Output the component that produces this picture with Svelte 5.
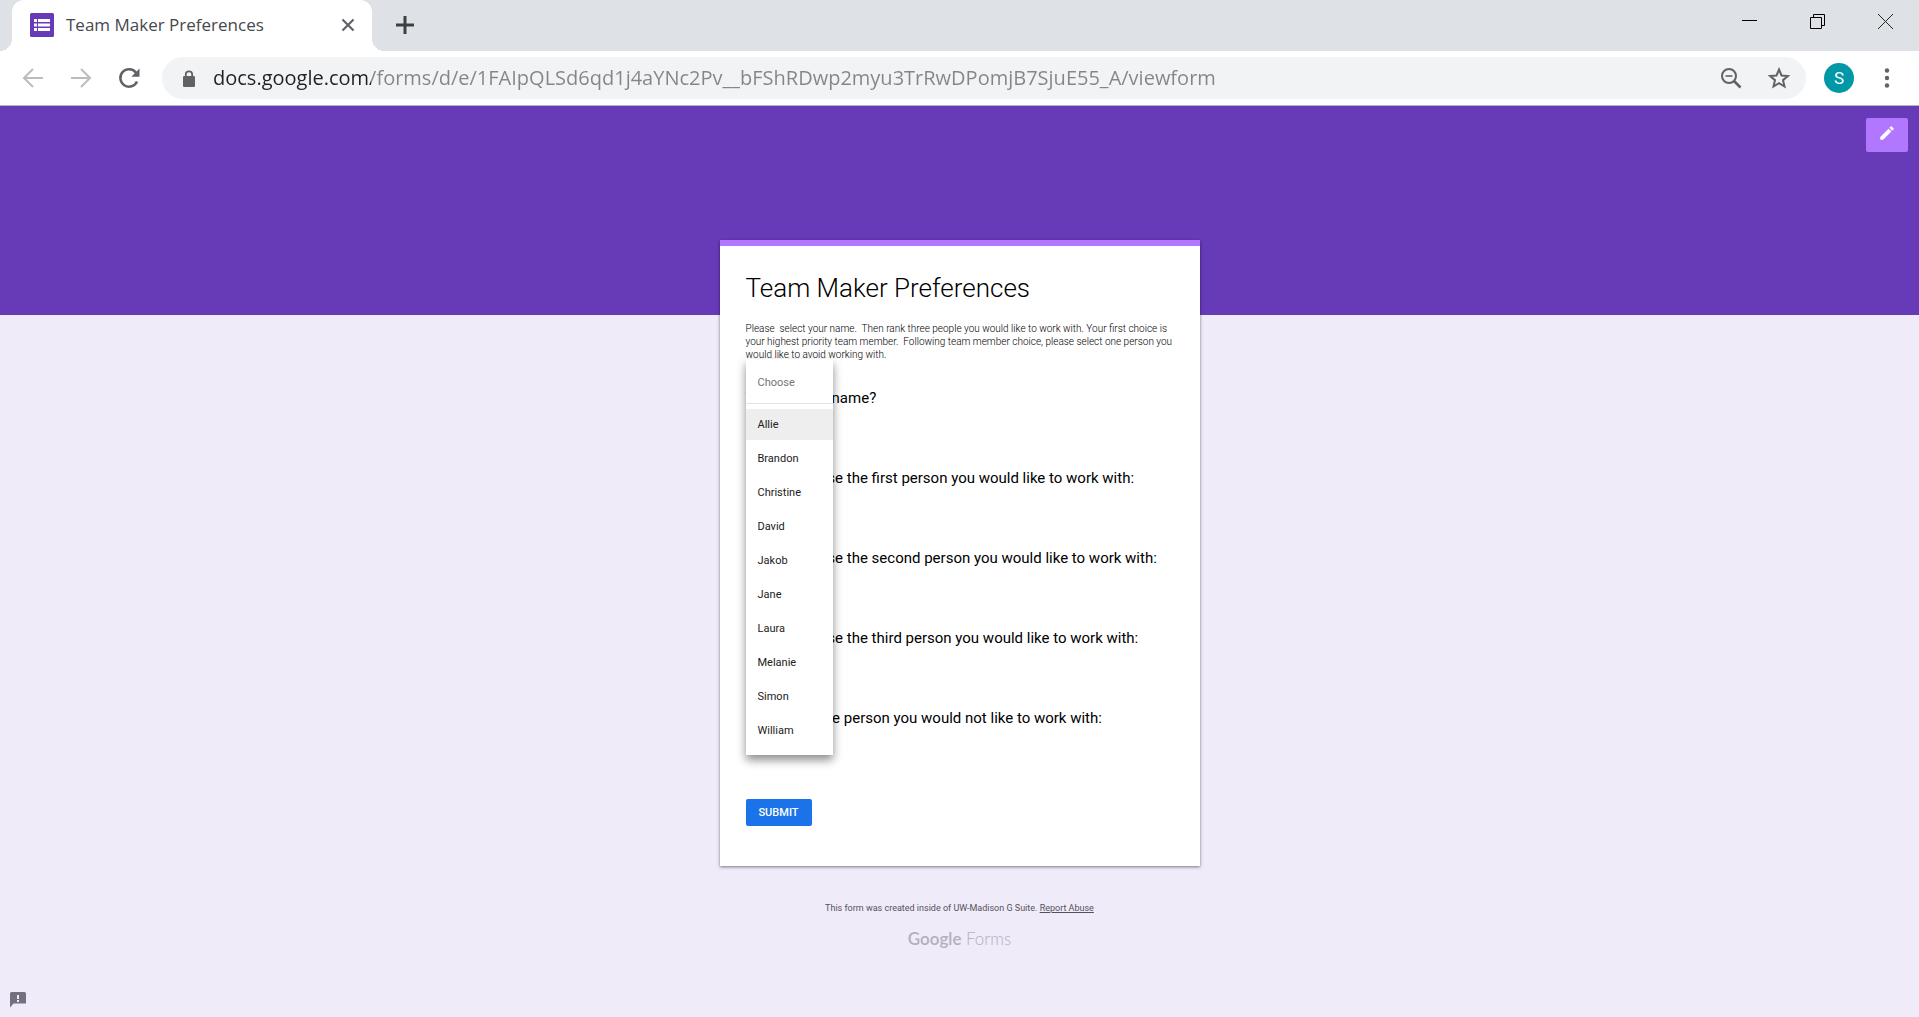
<script>
  const names = ['Allie', 'Brandon', 'Christine', 'David', 'Jakob', 'Jane', 'Laura', 'Melanie', 'Simon', 'William'];
  const questions = [
    { id: 'own', text: 'What is your name?' },
    { id: 'first', text: 'Please choose the first person you would like to work with:' },
    { id: 'second', text: 'Please choose the second person you would like to work with:' },
    { id: 'third', text: 'Please choose the third person you would like to work with:' },
    { id: 'avoid', text: 'Select the one person you would not like to work with:' },
  ];
  const description =
    'Please  select your name.  Then rank three people you would like to work with. Your first choice is your highest priority team member.  Following team member choice, please select one person you would like to avoid working with.';
  let highlighted = $state('Allie');
  let address = $state('docs.google.com/forms/d/e/1FAIpQLSd6qd1j4aYNc2Pv__bFShRDwp2myu3TrRwDPomjB7SjuE55_A/viewform');
</script>

<div class="window">
  <header class="tabstrip">
    <div class="tab">
      <svg class="favicon" viewBox="0 0 24 24" aria-hidden="true">
        <rect width="24" height="24" rx="1.5" fill="#673ab7" />
        <path d="M4 6h3v3H4zM8 6h12v3H8zM4 10.5h3v3H4zM8 10.5h12v3H8zM4 15h3v3H4zM8 15h12v3H8z" fill="#fff" />
      </svg>
      <span class="tab-title">Team Maker Preferences</span>
      <button class="icon-button" aria-label="Close tab">
        <svg viewBox="0 0 24 24"><path d="M6.5 6.500l11 11M17.500 6.500l-11 11" stroke="#5f6368" stroke-width="2.200" /></svg>
      </button>
    </div>
    <button class="icon-button new-tab" aria-label="New tab">
      <svg viewBox="0 0 24 24"><path d="M12 3v18M3 12h18" stroke="#3c4043" stroke-width="3" /></svg>
    </button>
    <div class="controls">
      <button aria-label="Minimize"><svg viewBox="0 0 15 15"><path d="M0 6.500h15" stroke="#000" /></svg></button>
      <button aria-label="Restore">
        <svg viewBox="0 0 15 15"><path d="M.5 3.500h11v11H.5zM3.500 3.500v-3h11v11h-3" fill="none" stroke="#000" /></svg>
      </button>
      <button aria-label="Close"><svg viewBox="0 0 15 15"><path d="M0 0l15 15M15 0L0 15" stroke="#222" /></svg></button>
    </div>
  </header>

  <div class="toolbar">
    <nav class="history" aria-label="History">
      <button class="icon-button" aria-label="Back">
        <svg viewBox="0 0 24 24"><path d="M22 12H3.500M12 3l-9 9 9 9" fill="none" stroke="#babcbe" stroke-width="2" /></svg>
      </button>
      <button class="icon-button" aria-label="Forward">
        <svg viewBox="0 0 24 24"><path d="M2 12h18.500M12 3l9 9-9 9" fill="none" stroke="#babcbe" stroke-width="2" /></svg>
      </button>
      <button class="icon-button" aria-label="Reload">
        <svg viewBox="0 0 24 24">
          <path d="M20 15.500A8.700 8.700 0 1 1 19 6.700" fill="none" stroke="#5f6368" stroke-width="2.500" />
          <path d="M22.500 2.500v8.200h-8.200z" fill="#5f6368" />
        </svg>
      </button>
    </nav>
    <div class="omnibox">
      <svg class="icon" viewBox="0 0 24 24" aria-hidden="true">
        <rect x="6" y="10" width="12" height="11" rx="1.300" fill="#5f6368" />
        <path d="M8.800 10.500V8.500a3.200 3.200 0 0 1 6.400 0v2" fill="none" stroke="#5f6368" stroke-width="1.800" />
      </svg>
      <input class="address" type="text" aria-label="Address" bind:value={address} />
      <div class="page-actions">
        <button class="icon-button" aria-label="Zoom">
          <svg viewBox="0 0 24 24">
            <circle cx="10" cy="10" r="7" fill="none" stroke="#5f6368" stroke-width="2" />
            <path d="M6.500 10h7" stroke="#5f6368" stroke-width="1.600" />
            <path d="M15 15l6.500 6.500" stroke="#5f6368" stroke-width="2.600" />
          </svg>
        </button>
        <button class="icon-button" aria-label="Bookmark this page">
          <svg viewBox="0 0 24 24">
            <path d="M12 3.500l2.500 6 6.400.5-4.900 4.200 1.500 6.300L12 17.200l-5.500 3.300L8 14.200 3.100 10l6.400-.5z" fill="none" stroke="#5f6368" stroke-width="2" />
          </svg>
        </button>
      </div>
    </div>
    <button class="avatar" aria-label="Profile">S</button>
    <button class="icon-button" aria-label="Menu">
      <svg viewBox="0 0 24 24" fill="#5f6368"><circle cx="12" cy="4.500" r="2.200" /><circle cx="12" cy="12" r="2.200" /><circle cx="12" cy="19.500" r="2.200" /></svg>
    </button>
  </div>

  <main class="page">
    <div class="banner">
      <button class="edit" aria-label="Edit this form">
        <svg viewBox="0 0 24 24">
          <path d="M3 17.250V21h3.750L17.810 9.940l-3.750-3.750L3 17.250zM20.710 7.040a1 1 0 0 0 0-1.410l-2.340-2.340a1 1 0 0 0-1.410 0l-1.830 1.830 3.750 3.750 1.830-1.830z" fill="#fff" />
        </svg>
      </button>
    </div>

    <form class="card" onsubmit={(e) => e.preventDefault()}>
      <h1>Team Maker Preferences</h1>
      <p class="description">{description}</p>
      <div class="questions">
        {#each questions as question, i (question.id)}
          <div class="question">
            <label for={question.id}>{question.text}</label>
            <select id={question.id}>
              <option value="">Choose</option>
              {#each names as name}<option>{name}</option>{/each}
            </select>
            {#if i === 0}
              <div class="menu" role="listbox" aria-label={question.text}>
                <button type="button" class="choice placeholder" role="option" aria-selected="false">Choose</button>
                <hr />
                {#each names as name}
                  <button
                    type="button"
                    class="choice"
                    class:highlighted={name === highlighted}
                    role="option"
                    aria-selected={name === highlighted}
                    onclick={() => (highlighted = name)}>{name}</button>
                {/each}
              </div>
            {/if}
          </div>
        {/each}
      </div>
      <button class="submit" type="submit">SUBMIT</button>
    </form>

    <footer>
      <p>This form was created inside of UW-Madison G Suite. <a href="#report">Report Abuse</a></p>
      <a class="brand" href="#forms"><strong>Google</strong> <span>Forms</span></a>
    </footer>

    <button class="feedback" aria-label="Report a problem">
      <svg viewBox="0 0 16 16"><path d="M1.500 0h13A1.500 1.500 0 0 1 16 1.500v10H3.500L0 15.500v-14A1.500 1.500 0 0 1 1.500 0z" fill="#757080" /><path d="M7 3h2v4H7zM7 8h2v2H7z" fill="#efebf9" /></svg>
    </button>
  </main>
</div>

<style>
  :global(body) {
    margin: 0;
  }
  .window {
    display: flex;
    flex-direction: column;
    min-height: 100vh;
    font-family: Roboto, 'Liberation Sans', sans-serif;
    color: #212121;
  }
  button {
    margin: 0;
    padding: 0;
    border: 0;
    background: none;
    font-family: inherit;
  }
  svg {
    display: block;
  }
  .icon,
  .icon-button,
  .icon-button svg {
    flex: none;
    width: 24px;
    height: 24px;
  }

  .tabstrip {
    display: flex;
    align-items: flex-start;
    height: 51px;
    padding-left: 12px;
    background: #dee1e6;
  }
  .tab {
    position: relative;
    box-sizing: border-box;
    display: flex;
    align-items: center;
    gap: 12px;
    width: 360px;
    height: 51px;
    padding: 0 12px 2px 18px;
    border-radius: 12px 12px 0 0;
    background: #fff;
  }
  .tab::before,
  .tab::after {
    content: '';
    position: absolute;
    bottom: 0;
    width: 12px;
    height: 12px;
  }
  .tab::before {
    right: 100%;
    background: radial-gradient(circle at 0 0, #dee1e6 12px, #fff 12px);
  }
  .tab::after {
    left: 100%;
    background: radial-gradient(circle at 100% 0, #dee1e6 12px, #fff 12px);
  }
  .favicon {
    width: 24px;
    height: 24px;
  }
  .tab-title {
    flex: 1;
    font-family: 'Open Sans', 'Noto Sans', sans-serif;
    font-size: 17px;
    color: #45494d;
    white-space: nowrap;
  }
  .new-tab {
    margin: 13px 0 0 21px;
  }
  .controls {
    display: flex;
    margin-left: auto;
  }
  .controls button {
    display: grid;
    place-items: center;
    width: 68px;
    height: 43px;
  }
  .controls svg {
    width: 15px;
    height: 15px;
  }

  .toolbar {
    display: flex;
    align-items: center;
    height: 54px;
    padding: 0 20px 0 21px;
    border-bottom: 1px solid #b5b5b8;
    background: #fff;
  }
  .history {
    display: flex;
    gap: 24px;
    margin-right: 21px;
  }
  .omnibox {
    flex: 1;
    display: flex;
    align-items: center;
    gap: 12px;
    height: 42px;
    padding: 0 15px;
    border-radius: 21px;
    background: #f1f3f4;
  }
  .address {
    flex: 1;
    min-width: 0;
    padding: 0;
    border: 0;
    outline: 0;
    background: linear-gradient(to right, #202124 158px, #80868b 158px);
    background-clip: text;
    color: transparent;
    font-family: 'Open Sans', 'Noto Sans', sans-serif;
    font-size: 20px;
    line-height: 30px;
  }
  .page-actions {
    display: flex;
    gap: 24px;
  }
  .avatar {
    width: 30px;
    height: 30px;
    margin: 0 21px 0 18px;
    border-radius: 50%;
    background: #0097a7;
    color: #fff;
    font-size: 17px;
  }

  .page {
    position: relative;
    flex: 1;
    background: #efebf9;
  }
  .banner {
    display: flex;
    justify-content: flex-end;
    align-items: flex-start;
    box-sizing: border-box;
    height: 209px;
    padding: 12px 11px;
    background: #673ab7;
  }
  .edit {
    display: grid;
    place-content: center;
    box-sizing: border-box;
    width: 42px;
    height: 34px;
    padding-bottom: 4px;
    border-radius: 2px;
    background: #b277ff;
  }
  .edit svg {
    width: 18px;
    height: 18px;
  }
  .card {
    box-sizing: border-box;
    width: 480px;
    max-width: 100%;
    margin: -75px auto 0;
    padding: 24px 26px 40px;
    border-top: 6px solid #b277ff;
    background: #fff;
    box-shadow: 0 1px 3px rgba(0, 0, 0, 0.5);
  }
  h1 {
    margin: 0;
    color: #000;
    font-size: 26px;
    font-weight: 300;
    line-height: 36px;
  }
  .description {
    margin: 16px 0 0;
    color: #000;
    font-size: 10px;
    font-weight: 300;
    line-height: 13px;
    white-space: pre-wrap;
  }
  .questions {
    display: grid;
    gap: 32px;
    margin-top: 27px;
  }
  .question {
    position: relative;
    display: grid;
    gap: 4px;
    justify-items: start;
  }
  label {
    font-size: 15px;
    line-height: 20px;
    color: #000;
  }
  select {
    appearance: none;
    width: 80px;
    height: 24px;
    padding: 0 11px;
    border: 0;
    background: #fff;
    color: #757575;
    font: 11px Roboto, sans-serif;
  }
  .menu {
    position: absolute;
    z-index: 1;
    top: -29px;
    left: 0;
    display: flex;
    flex-direction: column;
    gap: 3px;
    box-sizing: border-box;
    width: 87px;
    padding: 8px 0 9px;
    background: #fff;
    box-shadow: 0 5px 9px rgba(0, 0, 0, 0.45);
  }
  .choice {
    flex: none;
    height: 31px;
    padding: 0 12px;
    text-align: left;
    font-size: 11px;
    color: #212121;
  }
  .choice.highlighted {
    background: #eee;
  }
  .choice.placeholder {
    color: #757575;
  }
  hr {
    width: 100%;
    margin: 2px 0;
    border: 0;
    border-top: 1px solid #e4e4e4;
  }
  .submit {
    display: block;
    width: 66px;
    height: 27px;
    margin-top: 43px;
    border-radius: 2px;
    background: #1a73e8;
    color: #fff;
    font-size: 11px;
    font-weight: 500;
  }
  footer {
    display: flex;
    flex-direction: column;
    align-items: center;
    gap: 15px;
    padding: 36px 0 40px;
    color: #56525c;
  }
  footer p {
    margin: 0;
    font-size: 9px;
    line-height: 12px;
  }
  footer a {
    color: inherit;
  }
  .brand {
    font-family: Lato, sans-serif;
    font-size: 17px;
    line-height: 20px;
  }
  footer .brand {
    color: #b3b0bb;
    text-decoration: none;
  }
  .brand strong {
    font-weight: 600;
  }
  .brand span {
    font-weight: 300;
  }
  .feedback {
    position: absolute;
    bottom: 9px;
    left: 10px;
    width: 16px;
    height: 16px;
  }
</style>
